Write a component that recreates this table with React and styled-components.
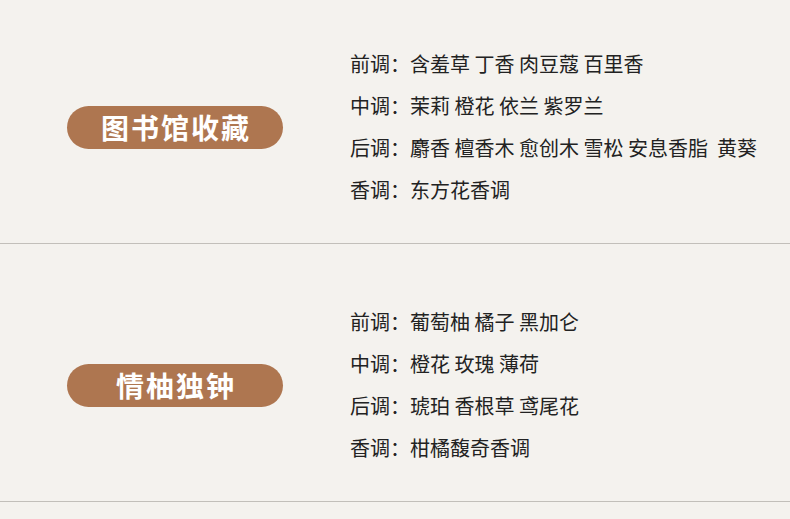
import React from "react";
import styled, { createGlobalStyle } from "styled-components";

const notes = [
  {
    name: "图书馆收藏",
    rows: [
      ["前调", "含羞草 丁香 肉豆蔻 百里香"],
      ["中调", "茉莉 橙花 依兰 紫罗兰"],
      ["后调", "麝香 檀香木 愈创木 雪松 安息香脂  黄葵"],
      ["香调", "东方花香调"],
    ],
  },
  {
    name: "情柚独钟",
    rows: [
      ["前调", "葡萄柚 橘子 黑加仑"],
      ["中调", "橙花 玫瑰 薄荷"],
      ["后调", "琥珀 香根草 鸢尾花"],
      ["香调", "柑橘馥奇香调"],
    ],
  },
];

const GlobalStyle = createGlobalStyle`
  html, body {
    margin: 0;
    padding: 0;
    background: #f4f2ee;
  }
  body {
    font-family: "Noto Sans CJK SC", "Noto Sans", sans-serif;
    color: #222;
  }
`;

const Page = styled.div`
  width: 790px;
  height: 519px;
  overflow: hidden;
  background: #f4f2ee;
`;

const Section = styled.section`
  display: flex;
  align-items: center;
  gap: 67px;
  padding: ${({ $first }) => ($first ? "43px" : "57px")} 0 32px 67px;
  border-bottom: 1px solid #c2bfba;
`;

const Badge = styled.div`
  width: 216px;
  height: 43px;
  border-radius: 22px;
  background: #ae7650;
  color: #fff;
  font-size: 28px;
  font-weight: 700;
  letter-spacing: 2px;
  text-indent: 2px;
  display: flex;
  align-items: center;
  justify-content: center;
  line-height: 1;
`;

const Notes = styled.ul`
  list-style: none;
  margin: 0;
  padding: 0;
  display: flex;
  flex-direction: column;
`;

const Note = styled.li`
  height: 42px;
  display: flex;
  align-items: center;
  font-size: 20px;
  line-height: 1;
  white-space: pre;
  color: #222;
`;

export default function App() {
  return (
    <Page>
      <GlobalStyle />
      {notes.map((group, i) => (
        <Section key={group.name} $first={i === 0}>
          <Badge>{group.name}</Badge>
          <Notes>
            {group.rows.map(([label, text]) => (
              <Note key={label}>
                {label}：{text}
              </Note>
            ))}
          </Notes>
        </Section>
      ))}
    </Page>
  );
}
